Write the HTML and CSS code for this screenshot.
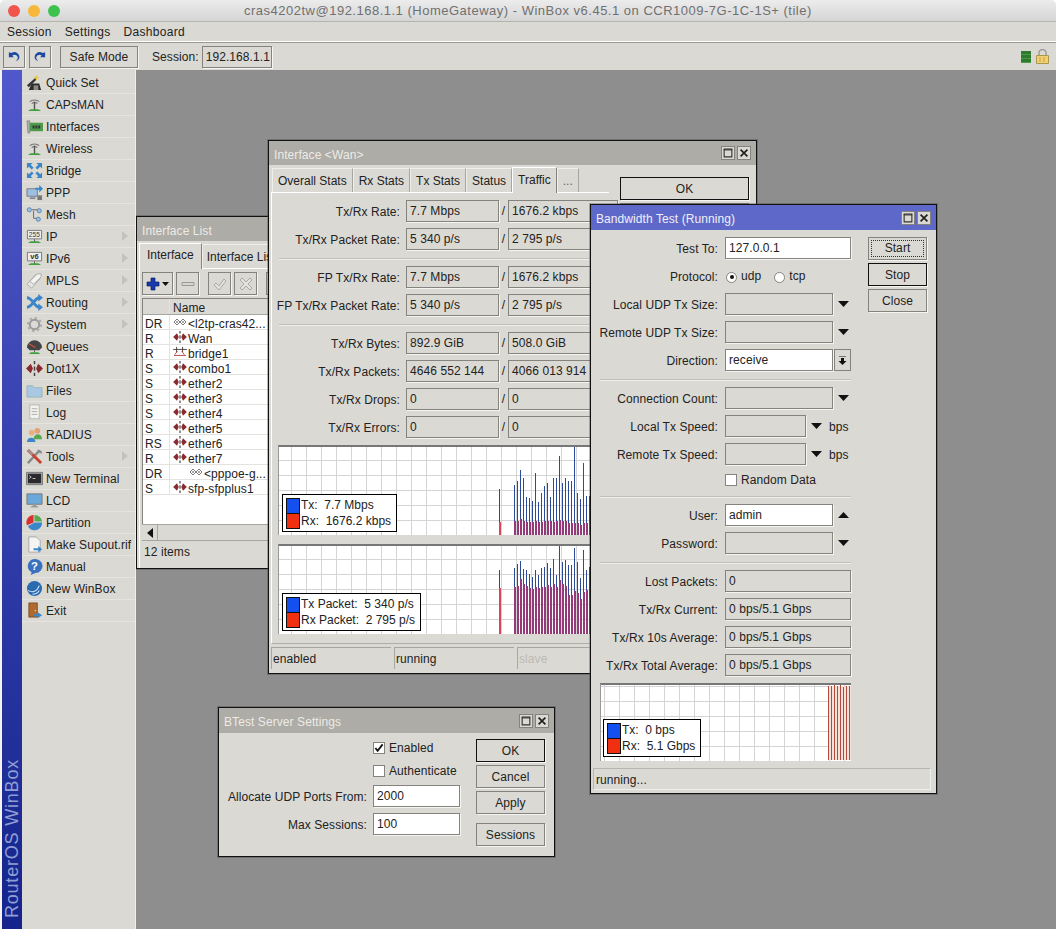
FILE: index.html
```html
<!DOCTYPE html>
<html lang="en">
<head>
  <meta charset="UTF-8">
  <meta name="viewport" content="width=device-width, initial-scale=1.0">
  <title>WinBox</title>
  <link rel="stylesheet" href="styles.css">
</head>
<body>
  <!-- Icon sheet -->
  <svg class="defs" width="0" height="0">
    <symbol id="i-wand" viewBox="0 0 18 18"><path d="M3 17l3-7h8l2 7z" fill="#2b2b2b"/><path d="M1 12L10 4l1.500 1.500L3 14z" fill="#333"/><path d="M11 1l1 2 2 1-2 1-1 2-1-2-2-1 2-1z" fill="#e8c840"/><path d="M8 12h5v5H8z" fill="#8a8a84"/></symbol>
    <symbol id="i-ant" viewBox="0 0 18 18"><path d="M4 6a6 4 0 0 1 10 0M6 8a4 3 0 0 1 6 0" fill="none" stroke="#777" stroke-width="1.200"/><path d="M9 6v9" stroke="#555" stroke-width="1.500"/><path d="M2 16h14l-3-2H5z" fill="#3fa040"/></symbol>
    <symbol id="i-card" viewBox="0 0 18 18"><path d="M1 3h3v13H2z" fill="#aaa" stroke="#777" stroke-width=".6"/><path d="M4 5h14v9H4z" fill="#4d9a4a"/><path d="M7 8h2v3H7zm3 0h2v3h-2zm3 0h2v3h-2z" fill="#333"/></symbol>
    <symbol id="i-bridge" viewBox="0 0 18 18"><path d="M1 1h6L5 3l3 3-2 2-3-3-2 2zM17 1v6l-2-2-3 3-2-2 3-3-2-2zM1 17v-6l2 2 3-3 2 2-3 3 2 2zM17 17h-6l2-2-3-3 2-2 3 3 2-2z" fill="#3a86c8"/></symbol>
    <symbol id="i-ppp" viewBox="0 0 18 18"><path d="M1 5h11v8H1z" fill="#9cc0e0" stroke="#667" stroke-width=".8"/><path d="M4 14h6v2H4z" fill="#889"/><path d="M10 4h4V1l4 4-4 4V6h-4z" fill="#3a86c8"/><path d="M12 12h5v5h-5z" fill="#777"/></symbol>
    <symbol id="i-mesh" viewBox="0 0 18 18"><circle cx="3.500" cy="4" r="2.200" fill="#9cc0e0" stroke="#47a" stroke-width=".8"/><circle cx="14" cy="5" r="2.200" fill="#9cc0e0" stroke="#47a" stroke-width=".8"/><circle cx="13" cy="14" r="2.200" fill="#9cc0e0" stroke="#47a" stroke-width=".8"/><path d="M6 4h6M8 5v8h3" fill="none" stroke="#667"/></symbol>
    <symbol id="i-tag" viewBox="0 0 18 18"><path d="M1 13L10 3h5v4l-9 10z" fill="#e8e8e4" stroke="#aaa"/><path d="M4 10l8-8h4v3l-8 8z" fill="#f4f4f0" stroke="#aaa"/></symbol>
    <symbol id="i-route" viewBox="0 0 18 18"><path d="M1 4c6 0 8 10 13 10" fill="none" stroke="#3a86c8" stroke-width="3"/><path d="M1 14c6 0 8-10 13-10" fill="none" stroke="#3a86c8" stroke-width="3"/><path d="M13 0l5 4-5 4zM13 10l5 4-5 4z" fill="#3a86c8"/></symbol>
    <symbol id="i-gear" viewBox="0 0 18 18"><circle cx="9" cy="9" r="5" fill="none" stroke="#999" stroke-width="2"/><circle cx="9" cy="9" r="7" fill="none" stroke="#aaa" stroke-width="2" stroke-dasharray="2.500 3"/><circle cx="9" cy="9" r="1.500" fill="#ddd"/></symbol>
    <symbol id="i-queue" viewBox="0 0 18 18"><path d="M1 10a8 7.500 0 0 1 16 0l-3 3H4z" fill="#444"/><path d="M3 6l7 4" stroke="#d05040" stroke-width="1.200"/><path d="M9 13v2" stroke="#555"/><path d="M3 17h12l-2-2H5z" fill="#3fa040"/></symbol>
    <symbol id="i-eth" viewBox="0 0 16 14"><path d="M0 7l4.500-4.500L6.500 7l-2 4.500zM16 7l-4.500-4.500L9.500 7l2 4.500z" fill="#8a2a30"/><path d="M8 0v3M8 5v4M8 11v3" stroke="#444" stroke-width="1.400"/></symbol>
    <symbol id="i-dyn" viewBox="0 0 16 14"><path d="M1 7l3.500-3.500L8 7l-3.500 3.500zM8 7l3.500-3.500L15 7l-3.500 3.500z" fill="#fff" stroke="#666"/><path d="M3.500 6h2v2h-2zM10.500 6h2v2h-2z" fill="#777"/></symbol>
    <symbol id="i-brg" viewBox="0 0 16 14"><path d="M0 4h16" stroke="#333"/><path d="M4 1v6M11 1v6" stroke="#333"/><path d="M2 10l3-4M13 10l-3-4M1 11h14" stroke="#a83030" fill="none"/></symbol>
    <symbol id="i-folder" viewBox="0 0 18 18"><path d="M1 4h6l2 2h8v10H1z" fill="#a8c8e4" stroke="#8aa" stroke-width=".7"/></symbol>
    <symbol id="i-log" viewBox="0 0 18 18"><path d="M4 1h10v15l-2-1-1 1-2-1-2 1-1-1-2 1z" fill="#f4f4ee" stroke="#aaa" stroke-width=".8"/><path d="M6 5h6M6 8h6M6 11h6" stroke="#aaa"/></symbol>
    <symbol id="i-users" viewBox="0 0 18 18"><circle cx="6" cy="7" r="3" fill="#e8b080"/><path d="M1 17c0-6 9-6 9 0z" fill="#3a86c8"/><circle cx="12" cy="5" r="3" fill="#e8a070"/><path d="M8 14c0-7 9-7 9 0z" fill="#58a850"/></symbol>
    <symbol id="i-tools" viewBox="0 0 18 18"><path d="M2 16L13 4" stroke="#888" stroke-width="2.500"/><path d="M12 2a4 4 0 0 1 5 4l-3-1-1 1z" fill="#888"/><path d="M2 2l14 14" stroke="#c84030" stroke-width="3"/><path d="M2 2l5 5" stroke="#999" stroke-width="2"/></symbol>
    <symbol id="i-term" viewBox="0 0 18 18"><path d="M.5 2.500h17v13H.5z" fill="#aaa" stroke="#777"/><path d="M2 4h14v10H2z" fill="#2a2a2e"/><path d="M3.500 6l2 1.500-2 1.500M7 9h3" stroke="#ccc" fill="none"/></symbol>
    <symbol id="i-lcd" viewBox="0 0 18 18"><path d="M1 2h16v11H1z" fill="#6aa8dc" stroke="#777"/><path d="M7 13h4v2H7zM5 15h8v1.500H5z" fill="#999"/></symbol>
    <symbol id="i-pie" viewBox="0 0 18 18"><path d="M8 9V1a8 8 0 0 0-7 11z" fill="#d83030"/><path d="M9 8V1a8 8 0 0 1 8 7z" fill="#58a850"/><path d="M2 13l7-4h8a8 8 0 0 1-15 4z" fill="#3a86c8"/></symbol>
    <symbol id="i-sup" viewBox="0 0 18 18"><path d="M3 1h8l4 4v12H3z" fill="#f4f4f4" stroke="#999" stroke-width=".8"/><path d="M8 13h5v-2.500l4 3.500-4 3.500V15H8z" fill="#3a86c8"/></symbol>
    <symbol id="i-globe" viewBox="0 0 18 18"><circle cx="9" cy="9" r="8" fill="#2a6ab0"/><path d="M2 11c5 3 10 1 12-5M7 15c3 0 6-2 7-4" fill="none" stroke="#cde" stroke-width="1.200"/></symbol>
    <symbol id="i-door" viewBox="0 0 18 18"><path d="M3 1h9v15H3z" fill="#b06a30" stroke="#704018" stroke-width=".8"/><circle cx="10" cy="9" r=".9" fill="#fc6"/><path d="M8 13h4v-2.500l5 3.500-5 3.500V15H8z" fill="#3a86c8"/></symbol>
    <symbol id="i-undo" viewBox="0 0 14 12"><path d="M1 1v6h6L5 5c2-2 5-1 6 1s0 4-2 5c3 0 5-3 4-6S8-1 4 2z" fill="#1c4aa0"/></symbol>
    <symbol id="i-max" viewBox="0 0 14 14"><path d="M2.500 2.500h9v9h-9z" fill="none" stroke="#333" stroke-width="1.300"/><path d="M2 3.500h10" stroke="#333"/></symbol>
    <symbol id="i-close" viewBox="0 0 14 14"><path d="M3 3l8 8M11 3l-8 8" stroke="#222" stroke-width="2"/></symbol>
    <symbol id="i-drop" viewBox="0 0 11 6"><path d="M0 0h11L5.500 6z" fill="#111"/></symbol>
    <symbol id="i-up" viewBox="0 0 11 6"><path d="M0 6h11L5.500 0z" fill="#111"/></symbol>
  </svg>

  <!-- Window chrome -->
  <header class="mac-title">
    <div class="lights"><span class="light red"></span><span class="light yellow"></span><span class="light green"></span></div>
    <div class="mac-text">cras4202tw@192.168.1.1 (HomeGateway) - WinBox v6.45.1 on CCR1009-7G-1C-1S+ (tile)</div>
  </header>
  <nav class="menubar"><span>Session</span><span>Settings</span><span>Dashboard</span></nav>
  <div class="toolbar">
    <button class="btn tool"><svg class="undo"><use href="#i-undo"/></svg></button>
    <button class="btn tool"><svg class="undo flip"><use href="#i-undo"/></svg></button>
    <button class="btn safe">Safe Mode</button>
    <span class="session-label">Session:</span>
    <div class="fld session">192.168.1.1</div>
    <div class="tray">
      <div class="hdd"></div>
      <svg class="lock" viewBox="0 0 13 15"><path d="M3 7V4a3.500 3.500 0 0 1 7 0v3" fill="none" stroke="#999" stroke-width="1.400"/><path d="M.5 6.500h12v8H.5z" fill="#f0d070" stroke="#a89850"/><path d="M4 8v5M8 8v5" stroke="#c8a040"/></svg>
    </div>
  </div>

  <div class="main">
    <!-- Side Menu -->
    <aside class="sidebar">
      <div class="brand"><span>RouterOS WinBox</span></div>
      <ul class="menu">
        <li><svg class="ic"><use href="#i-wand"/></svg>Quick Set</li>
        <li><svg class="ic"><use href="#i-ant"/></svg>CAPsMAN</li>
        <li><svg class="ic"><use href="#i-card"/></svg>Interfaces</li>
        <li><svg class="ic"><use href="#i-ant"/></svg>Wireless</li>
        <li><svg class="ic"><use href="#i-bridge"/></svg>Bridge</li>
        <li><svg class="ic"><use href="#i-ppp"/></svg>PPP</li>
        <li><svg class="ic"><use href="#i-mesh"/></svg>Mesh</li>
        <li class="sub"><svg class="ic" viewBox="0 0 18 18"><path d="M1.500 2.500h15v9h-15z" fill="#eee" stroke="#777"/><text x="9" y="10" font-size="7" text-anchor="middle" fill="#333">255</text><path d="M9 12v3" stroke="#555"/><path d="M2 16h14l-3-2H5z" fill="#3fa040"/></svg>IP</li>
        <li class="sub"><svg class="ic" viewBox="0 0 18 18"><path d="M1.500 2.500h15v9h-15z" fill="#eee" stroke="#777"/><text x="9" y="10" font-size="8" font-weight="bold" text-anchor="middle" fill="#333">v6</text><path d="M9 12v3" stroke="#555"/><path d="M2 16h14l-3-2H5z" fill="#3fa040"/></svg>IPv6</li>
        <li class="sub"><svg class="ic"><use href="#i-tag"/></svg>MPLS</li>
        <li class="sub"><svg class="ic"><use href="#i-route"/></svg>Routing</li>
        <li class="sub"><svg class="ic"><use href="#i-gear"/></svg>System</li>
        <li><svg class="ic"><use href="#i-queue"/></svg>Queues</li>
        <li><svg class="ic"><use href="#i-eth"/></svg>Dot1X</li>
        <li><svg class="ic"><use href="#i-folder"/></svg>Files</li>
        <li><svg class="ic"><use href="#i-log"/></svg>Log</li>
        <li><svg class="ic"><use href="#i-users"/></svg>RADIUS</li>
        <li class="sub"><svg class="ic"><use href="#i-tools"/></svg>Tools</li>
        <li><svg class="ic"><use href="#i-term"/></svg>New Terminal</li>
        <li><svg class="ic"><use href="#i-lcd"/></svg>LCD</li>
        <li><svg class="ic"><use href="#i-pie"/></svg>Partition</li>
        <li><svg class="ic"><use href="#i-sup"/></svg>Make Supout.rif</li>
        <li><svg class="ic" viewBox="0 0 18 18"><path d="M9 1a8 7.500 0 0 1 1 15l-5 2 1-3A8 7.500 0 0 1 9 1z" fill="#3a70c0"/><text x="9" y="13" font-size="12" font-weight="bold" text-anchor="middle" fill="#fff">?</text></svg>Manual</li>
        <li><svg class="ic"><use href="#i-globe"/></svg>New WinBox</li>
        <li><svg class="ic"><use href="#i-door"/></svg>Exit</li>
      </ul>
    </aside>

    <main class="desktop">
      <!-- Interface List -->
      <section class="win win-list">
        <div class="win-title"><span>Interface List</span></div>
        <div class="tabs list-tabs">
          <div class="tab active">Interface</div>
          <div class="tab">Interface List</div>
        </div>
        <div class="list-panel">
          <div class="list-tools">
            <button class="btn ltool add">
              <svg viewBox="0 0 14 14" class="plus"><path d="M5 1h4v4h4v4H9v4H5V9H1V5h4z" fill="#1838b0" stroke="#0c1c60" stroke-width=".7"/></svg>
              <svg class="tiny"><use href="#i-drop"/></svg>
            </button>
            <button class="btn ltool"><svg viewBox="0 0 14 14" class="plus"><path d="M1 5.500h12v3H1z" fill="#d8d6d0" stroke="#999"/></svg></button>
            <button class="btn ltool gap"><svg viewBox="0 0 14 14" class="plus"><path d="M1 8l2-2 3 3 5-7 2 2-7 9z" fill="#e4e2dc" stroke="#aaa"/></svg></button>
            <button class="btn ltool"><svg viewBox="0 0 14 14" class="plus"><path d="M3 1l4 4 4-4 2 2-4 4 4 4-2 2-4-4-4 4-2-2 4-4-4-4z" fill="#e4e2dc" stroke="#aaa"/></svg></button>
            <button class="btn ltool gap"></button>
          </div>
          <div class="table">
            <div class="tr th"><div class="flag"></div><div class="name">Name<span class="sort"></span></div></div>
            <div class="tr"><div class="flag">DR</div><div class="name"><svg class="ti"><use href="#i-dyn"/></svg>&lt;l2tp-cras42...</div></div>
            <div class="tr"><div class="flag">R</div><div class="name"><svg class="ti"><use href="#i-eth"/></svg>Wan</div></div>
            <div class="tr"><div class="flag">R</div><div class="name"><svg class="ti"><use href="#i-brg"/></svg>bridge1</div></div>
            <div class="tr"><div class="flag">S</div><div class="name"><svg class="ti"><use href="#i-eth"/></svg>combo1</div></div>
            <div class="tr"><div class="flag">S</div><div class="name"><svg class="ti"><use href="#i-eth"/></svg>ether2</div></div>
            <div class="tr"><div class="flag">S</div><div class="name"><svg class="ti"><use href="#i-eth"/></svg>ether3</div></div>
            <div class="tr"><div class="flag">S</div><div class="name"><svg class="ti"><use href="#i-eth"/></svg>ether4</div></div>
            <div class="tr"><div class="flag">S</div><div class="name"><svg class="ti"><use href="#i-eth"/></svg>ether5</div></div>
            <div class="tr"><div class="flag">RS</div><div class="name"><svg class="ti"><use href="#i-eth"/></svg>ether6</div></div>
            <div class="tr"><div class="flag">R</div><div class="name"><svg class="ti"><use href="#i-eth"/></svg>ether7</div></div>
            <div class="tr"><div class="flag">DR</div><div class="name indent"><svg class="ti"><use href="#i-dyn"/></svg>&lt;pppoe-g...</div></div>
            <div class="tr"><div class="flag">S</div><div class="name"><svg class="ti"><use href="#i-eth"/></svg>sfp-sfpplus1</div></div>
          </div>
          <div class="hscroll"><div class="sbtn"><svg viewBox="0 0 6 10" class="sarrow"><path d="M6 0v10L0 5z" fill="#111"/></svg></div></div>
          <div class="list-status">12 items</div>
        </div>
      </section>

      <!-- Interface Wan -->
      <section class="win win-iface">
        <div class="win-title"><span>Interface &lt;Wan&gt;</span><div class="wbtns"><div class="wbtn"><svg><use href="#i-max"/></svg></div><div class="wbtn"><svg><use href="#i-close"/></svg></div></div></div>
        <div class="iface-body">
          <div class="iface-left">
            <div class="tabs iface-tabs">
              <div class="tab">Overall Stats</div>
              <div class="tab">Rx Stats</div>
              <div class="tab">Tx Stats</div>
              <div class="tab">Status</div>
              <div class="tab active">Traffic</div>
              <div class="tab more">...</div>
            </div>
            <div class="stats">
              <div class="row"><div class="lbl">Tx/Rx Rate:</div><div class="fld f1">7.7 Mbps</div><i class="slash">/</i><div class="fld f2">1676.2 kbps</div></div>
              <div class="row"><div class="lbl">Tx/Rx Packet Rate:</div><div class="fld f1">5 340 p/s</div><i class="slash">/</i><div class="fld f2">2 795 p/s</div></div>
              <div class="sep"></div>
              <div class="row"><div class="lbl">FP Tx/Rx Rate:</div><div class="fld f1">7.7 Mbps</div><i class="slash">/</i><div class="fld f2">1676.2 kbps</div></div>
              <div class="row"><div class="lbl">FP Tx/Rx Packet Rate:</div><div class="fld f1">5 340 p/s</div><i class="slash">/</i><div class="fld f2">2 795 p/s</div></div>
              <div class="sep"></div>
              <div class="row"><div class="lbl">Tx/Rx Bytes:</div><div class="fld f1">892.9 GiB</div><i class="slash">/</i><div class="fld f2">508.0 GiB</div></div>
              <div class="row"><div class="lbl">Tx/Rx Packets:</div><div class="fld f1">4646 552 144</div><i class="slash">/</i><div class="fld f2">4066 013 914</div></div>
              <div class="row"><div class="lbl">Tx/Rx Drops:</div><div class="fld f1">0</div><i class="slash">/</i><div class="fld f2">0</div></div>
              <div class="row"><div class="lbl">Tx/Rx Errors:</div><div class="fld f1">0</div><i class="slash">/</i><div class="fld f2">0</div></div>

              <div class="chart chart-wide first">
                <svg class="bars" width="330" height="90">
                  <path class="blue" d="M221.500 44V77M236.500 40V76M239.500 36V76M242.500 25V74M245.500 33V76M248.500 52V77M251.500 53V77M254.500 56V77M257.500 28V76M260.500 57V77M263.500 48V77M266.500 41V76M269.500 38V76M272.500 52V76M275.500 33V77M278.500 33V76M281.500 11V75M284.500 38V76M287.500 33V76M290.500 36V78M293.500 36V78M296.500 2V78M299.500 48V78M302.500 54V80M305.500 18V78M308.500 51V78M311.500 51V78"/>
                  <path class="hot" d="M222 77V90"/>
                  <path class="purple" d="M237 76V90M240 76V90M243 74V90M246 76V90M249 77V90M252 77V90M255 77V90M258 76V90M261 77V90M264 77V90M267 76V90M270 76V90M273 76V90M276 77V90M279 76V90M282 75V90M285 76V90M288 76V90M291 78V90M294 78V90M297 78V90M300 78V90M303 80V90M306 78V90M309 78V90M312 78V90"/>
                </svg>
                <div class="legend leg-a">
                  <div class="swatches"><b class="sw-tx"></b><b class="sw-rx"></b></div>
                  <div class="leg-text"><div>Tx:  7.7 Mbps</div><div>Rx:  1676.2 kbps</div></div>
                </div>
              </div>
              <div class="chart chart-wide">
                <svg class="bars" width="330" height="90">
                  <path class="blue" d="M221.500 26V44M236.500 24V43M239.500 20V42M242.500 17V35M245.500 25V40M248.500 26V42M251.500 30V44M254.500 33V45M257.500 26V43M260.500 31V44M263.500 24V43M266.500 23V43M269.500 19V41M272.500 24V43M275.500 15V40M278.500 31V43M281.500 2V36M284.500 18V40M287.500 16V42M290.500 21V51M293.500 21V51M296.500 4V47M299.500 18V49M302.500 34V55M305.500 6V48M308.500 26V46M311.500 23V52"/>
                  <path class="hot" d="M222 44V90"/>
                  <path class="purple" d="M237 43V90M240 42V90M243 35V90M246 40V90M249 42V90M252 44V90M255 45V90M258 43V90M261 44V90M264 43V90M267 43V90M270 41V90M273 43V90M276 40V90M279 43V90M282 36V90M285 40V90M288 42V90M291 51V90M294 51V90M297 47V90M300 49V90M303 55V90M306 48V90M309 46V90M312 52V90"/>
                </svg>
                <div class="legend leg-a">
                  <div class="swatches"><b class="sw-tx"></b><b class="sw-rx"></b></div>
                  <div class="leg-text"><div>Tx Packet:  5 340 p/s</div><div>Rx Packet:  2 795 p/s</div></div>
                </div>
              </div>
            </div>
          </div>
          <div class="iface-side">
            <button class="btn side-btn">OK</button>
            <button class="btn side-btn"></button>
          </div>
        </div>
        <div class="statusbar">
          <div class="cell">enabled</div>
          <div class="cell">running</div>
          <div class="cell off">slave</div>
        </div>
      </section>

      <!-- BTest Server -->
      <section class="win win-btest">
        <div class="win-title"><span>BTest Server Settings</span><div class="wbtns"><div class="wbtn"><svg><use href="#i-max"/></svg></div><div class="wbtn"><svg><use href="#i-close"/></svg></div></div></div>
        <div class="btest-body">
          <div class="btest-form">
            <div class="row check"><div class="lbl"></div><div class="cb"><svg viewBox="0 0 11 11"><path d="M1.500 5.500l2.500 3 5.500-7" fill="none" stroke="#111" stroke-width="2"/></svg></div>Enabled</div>
            <div class="row check"><div class="lbl"></div><div class="cb"></div>Authenticate</div>
            <div class="row"><div class="lbl">Allocate UDP Ports From:</div><div class="fld white">2000</div></div>
            <div class="row"><div class="lbl">Max Sessions:</div><div class="fld white">100</div></div>
          </div>
          <div class="btest-btns">
            <button class="btn default">OK</button>
            <button class="btn">Cancel</button>
            <button class="btn">Apply</button>
            <button class="btn spaced">Sessions</button>
          </div>
        </div>
      </section>

      <!-- Bandwidth Test -->
      <section class="win win-bw">
        <div class="win-title on"><span>Bandwidth Test (Running)</span><div class="wbtns"><div class="wbtn"><svg><use href="#i-max"/></svg></div><div class="wbtn"><svg><use href="#i-close"/></svg></div></div></div>
        <div class="bw-body">
          <div class="bw-form">
            <div class="row"><div class="lbl">Test To:</div><div class="fld white full">127.0.0.1</div></div>
            <div class="row"><div class="lbl">Protocol:</div><span class="radio on"></span><span class="rlabel">udp</span><span class="radio"></span><span class="rlabel">tcp</span></div>
            <div class="row"><div class="lbl">Local UDP Tx Size:</div><div class="fld mid"></div><svg class="drop"><use href="#i-drop"/></svg></div>
            <div class="row"><div class="lbl">Remote UDP Tx Size:</div><div class="fld mid"></div><svg class="drop"><use href="#i-drop"/></svg></div>
            <div class="row"><div class="lbl">Direction:</div><div class="fld white mid">receive</div><div class="selbtn"><svg viewBox="0 0 9 9"><path d="M1 0h7" stroke="#111"/><path d="M3 2h3v3h2.500L4.500 9 .5 5H3z" fill="#111"/></svg></div></div>
            <div class="sep"></div>
            <div class="row"><div class="lbl">Connection Count:</div><div class="fld mid"></div><svg class="drop"><use href="#i-drop"/></svg></div>
            <div class="row"><div class="lbl">Local Tx Speed:</div><div class="fld short"></div><svg class="drop"><use href="#i-drop"/></svg><span class="unit">bps</span></div>
            <div class="row"><div class="lbl">Remote Tx Speed:</div><div class="fld short"></div><svg class="drop"><use href="#i-drop"/></svg><span class="unit">bps</span></div>
            <div class="row check random"><div class="lbl"></div><div class="cb"></div>Random Data</div>
            <div class="sep"></div>
            <div class="row"><div class="lbl">User:</div><div class="fld white mid">admin</div><svg class="drop"><use href="#i-up"/></svg></div>
            <div class="row"><div class="lbl">Password:</div><div class="fld mid"></div><svg class="drop"><use href="#i-drop"/></svg></div>
            <div class="sep"></div>
            <div class="row"><div class="lbl">Lost Packets:</div><div class="fld full">0</div></div>
            <div class="row"><div class="lbl">Tx/Rx Current:</div><div class="fld full">0 bps/5.1 Gbps</div></div>
            <div class="row"><div class="lbl">Tx/Rx 10s Average:</div><div class="fld full">0 bps/5.1 Gbps</div></div>
            <div class="row"><div class="lbl">Tx/Rx Total Average:</div><div class="fld full">0 bps/5.1 Gbps</div></div>
            <div class="chart chart-bw">
              <svg class="bars" width="251" height="78">
                <path class="rust-bg" d="M229 3h22v74h-22z"/>
                <path class="rust" d="M228.500 3V77M231.500 3V77M234.500 2V77M237.500 3V77M240.500 2V77M243.500 4V77M246.500 3V77M249.500 3V77"/>
              </svg>
              <div class="legend leg-b">
                <div class="swatches"><b class="sw-tx"></b><b class="sw-rx"></b></div>
                <div class="leg-text"><div>Tx:  0 bps</div><div>Rx:  5.1 Gbps</div></div>
              </div>
            </div>
          </div>
          <div class="bw-btns">
            <button class="btn focus"><span>Start</span></button>
            <button class="btn default">Stop</button>
            <button class="btn">Close</button>
          </div>
        </div>
        <div class="bw-status">running...</div>
      </section>
    </main>
  </div>
</body>
</html>
```
FILE: styles.css
```css
/* General Reset */
* {
  margin: 0;
  padding: 0;
  box-sizing: border-box;
}

body {
  width: 1056px;
  height: 929px;
  overflow: hidden;
  background: #fff;
  color: #222;
  font: 12px "Liberation Sans", Arial, sans-serif;
  letter-spacing: 0.08px;
  display: flex;
  flex-direction: column;
}

svg text {
  font-family: "Liberation Sans", Arial, sans-serif;
}

.defs {
  position: absolute;
}

button {
  font: inherit;
  letter-spacing: inherit;
  color: inherit;
}

/* Title Bar */
.mac-title {
  height: 22px;
  display: flex;
  align-items: center;
  background: linear-gradient(#ececec, #d5d5d5);
  border-bottom: 1px solid #b5b5b0;
  border-radius: 5px 5px 0 0;
  flex: none;
}

.lights {
  display: flex;
  gap: 8px;
  padding-left: 8px;
  width: 244px;
}

.light {
  width: 12px;
  height: 12px;
  border-radius: 50%;
}

.red { background: #f0544c; }
.yellow { background: #f6b73a; }
.green { background: #3cc24f; }

.mac-text {
  color: #707070;
  font-size: 13px;
  letter-spacing: 0.5px;
  white-space: nowrap;
}

/* Menu Bar */
.menubar {
  height: 20px;
  display: flex;
  align-items: center;
  gap: 13px;
  padding-left: 7px;
  background: #dbd9d3;
  border-bottom: 1px solid #fff;
  letter-spacing: 0.3px;
  flex: none;
}

/* Tool Bar */
.toolbar {
  height: 28px;
  display: flex;
  align-items: center;
  background: #dbd9d3;
  border-top: 1px solid #9a9892;
  padding-left: 3px;
  flex: none;
}

.btn {
  background: #dbd9d3;
  border: 1px solid #85837d;
  box-shadow: 1px 1px 0 #f6f5f1;
  height: 23px;
  display: flex;
  align-items: center;
  justify-content: center;
}

.tool {
  width: 22px;
  height: 22px;
  margin-right: 4px;
}

.undo {
  width: 12px;
  height: 11px;
}

.flip {
  transform: scaleX(-1);
}

.safe {
  width: 78px;
  height: 22px;
  margin-left: 5px;
}

.session-label {
  margin-left: 14px;
  margin-right: 3px;
}

.session {
  width: 70px;
  height: 21px;
}

.tray {
  margin-left: auto;
  display: flex;
  align-items: center;
  gap: 5px;
  padding-right: 7px;
}

.hdd {
  width: 10px;
  height: 12px;
  background: repeating-linear-gradient(#2f7a2f 0 3px, #4a9a45 3px 4px);
}

.lock {
  width: 13px;
  height: 15px;
}

/* Main Area */
.main {
  flex: 1;
  display: flex;
  min-height: 0;
}

.sidebar {
  width: 136px;
  display: flex;
  background: #dbd9d3;
  border-left: 2px solid #f4f3ef;
  border-right: 1px solid #f0efea;
  flex: none;
  z-index: 1;
}

.brand {
  width: 20px;
  background: linear-gradient(#5058cc, #3f49b8 30%, #14248c);
  display: flex;
  align-items: flex-end;
  justify-content: center;
  padding-bottom: 11px;
}

.brand span {
  writing-mode: vertical-rl;
  transform: rotate(180deg);
  font-size: 18px;
  letter-spacing: 0.8px;
  color: #8f9fd4;
  white-space: nowrap;
}

.menu {
  list-style: none;
  flex: 1;
  padding-top: 2px;
}

.menu li {
  height: 22px;
  display: flex;
  align-items: center;
  padding-left: 4px;
  border-bottom: 1px solid #e6e4df;
  position: relative;
  white-space: nowrap;
}

.menu .sub::after {
  content: "";
  position: absolute;
  left: 100px;
  top: 5px;
  border-left: 6px solid #c4c2bc;
  border-top: 5px solid transparent;
  border-bottom: 5px solid transparent;
}

.ic {
  width: 17px;
  height: 17px;
  margin-right: 3px;
  flex: none;
}

.desktop {
  flex: 1;
  position: relative;
  background: #8e8e8e;
}

/* Windows */
.win {
  position: absolute;
  display: flex;
  flex-direction: column;
  background: #dbd9d3;
  border: 1px solid #111;
  box-shadow: 0 0 0 1px rgba(60, 60, 60, 0.35);
  overflow: hidden;
}

.win-list { left: 0; top: 146px; width: 200px; height: 353px; }
.win-iface { left: 132px; top: 70px; width: 489px; height: 534px; }
.win-btest { left: 82px; top: 637px; width: 337px; height: 150px; }
.win-bw { left: 454px; top: 134px; width: 347px; height: 590px; }

.win-title {
  height: 24px;
  flex: none;
  display: flex;
  align-items: center;
  justify-content: space-between;
  padding: 0 5px;
  background: #aeaca6;
  color: #ecebe6;
  white-space: nowrap;
}

.win-title span {
  padding-top: 3px;
}

.win-title.on {
  background: #5d68c8;
  color: #f0f0f8;
}

.win-bw .win-title,
.win-btest .win-title {
  height: 25px;
}

.wbtns {
  display: flex;
  gap: 2px;
}

.wbtn {
  width: 14px;
  height: 14px;
  background: #dbd9d3;
  border: 1px solid #85837d;
}

.wbtn svg {
  width: 12px;
  height: 12px;
  display: block;
}

/* Tabs */
.tabs {
  height: 27px;
  display: flex;
  align-items: flex-end;
  flex: none;
  letter-spacing: 0;
}

.tab {
  height: 24px;
  display: flex;
  align-items: center;
  padding: 0 5px;
  border: 1px solid #efeee9;
  border-bottom: 0;
  border-right-color: #a8a6a0;
  white-space: nowrap;
}

.tab.active {
  height: 26px;
  padding-bottom: 2px;
  background: #dbd9d3;
  border-color: #fff;
  border-right-color: #85837d;
  margin-bottom: -1px;
  position: relative;
  z-index: 1;
}

.iface-tabs {
  padding-left: 1px;
}

.more {
  color: #666;
}

/* Form Rows */
.row {
  height: 22px;
  display: flex;
  align-items: center;
  margin-bottom: 6px;
  white-space: nowrap;
}

.lbl {
  text-align: right;
  padding-top: 2px;
  flex: none;
}

.fld {
  height: 22px;
  line-height: 21px;
  padding-left: 3px;
  background: #dbd9d3;
  border: 1px solid #85837d;
  box-shadow: 1px 1px 0 #f6f5f1;
  flex: none;
  white-space: nowrap;
  overflow: hidden;
}

.fld.white {
  background: #fff;
}

.sep {
  height: 2px;
  margin: 8px 0 6px;
  border-top: 1px solid #c0beb8;
  border-bottom: 1px solid #f0efea;
}

.slash {
  width: 9px;
  font-style: normal;
  text-align: center;
  flex: none;
}

/* Interface Window */
.iface-body {
  flex: 1;
  display: flex;
}

.iface-left {
  width: 340px;
  flex: none;
  padding-left: 2px;
}

.stats {
  height: 452px;
  padding-top: 7px;
  border-top: 1px solid #fff;
  border-left: 1px solid #fff;
  border-bottom: 1px solid #b0aea8;
}

.stats .lbl {
  width: 128px;
  margin-right: 6px;
}

.stats .sep {
  margin-left: 7px;
}

.f1 { width: 93px; }
.f2 { width: 110px; }

.iface-side {
  padding: 12px 0 0 11px;
  display: flex;
  flex-direction: column;
  gap: 3px;
}

.side-btn {
  width: 129px;
  height: 23px;
}

.iface-side .side-btn:first-child {
  border-color: #111;
}

.statusbar {
  display: flex;
  gap: 3px;
  padding: 2px 0 4px 2px;
  flex: none;
}

.cell {
  width: 120px;
  height: 22px;
  line-height: 22px;
  padding-left: 1px;
  border-top: 1px solid #a8a6a0;
  border-left: 1px solid #a8a6a0;
}

.off {
  color: #bcbab4;
}

/* Charts */
.chart {
  position: relative;
  height: 90px;
  background-color: #fff;
  background-image:
    linear-gradient(#d4d4d4 1px, transparent 1px),
    linear-gradient(90deg, #d4d4d4 1px, transparent 1px);
  background-size: 15px 15px;
  background-position: 12px 13px;
  border-top: 2px solid #777;
  border-left: 1px solid #999;
  overflow: hidden;
}

.chart-wide {
  margin: 0 0 9px 6px;
  width: 330px;
}

.first {
  margin-top: 7px;
}

.bars {
  position: absolute;
  left: -1px;
  top: -2px;
  fill: none;
}

.blue { stroke: #2d4a98; stroke-width: 1; }
.purple { stroke: #953a78; stroke-width: 2; }
.hot { stroke: #d8455c; stroke-width: 2; }
.rust { stroke: #b5493b; stroke-width: 1; }
.rust-bg { fill: #f6e0da; }

.legend {
  position: absolute;
  left: 3px;
  top: 47px;
  height: 38px;
  display: flex;
  align-items: center;
  gap: 1px;
  padding: 0 5px 0 3px;
  background: #fff;
  border: 1px solid #000;
  letter-spacing: 0;
  white-space: pre;
}

.leg-b {
  top: 34px;
  left: 2px;
}

.swatches {
  display: flex;
  flex-direction: column;
}

.swatches b {
  display: block;
  width: 14px;
  height: 16px;
  border: 1px solid #111;
}

.swatches b + b {
  margin-top: -1px;
}

.sw-tx { background: #1450f0; }
.sw-rx { background: #f03010; }

.leg-text div {
  height: 16px;
  line-height: 16px;
}

/* Interface List Window */
.list-tabs {
  padding-left: 2px;
}

.list-tabs .tab {
  padding: 0 5px 0 4px;
}

.list-tabs .tab.active {
  padding: 0 7px 4px;
  border-left-color: #fff;
}

.list-panel {
  flex: 1;
  margin-left: 2px;
  padding: 3px 0 0 2px;
  border-top: 1px solid #fff;
  border-left: 1px solid #fff;
  display: flex;
  flex-direction: column;
  min-height: 0;
}

.list-tools {
  display: flex;
  gap: 3px;
  height: 23px;
  margin-bottom: 3px;
  flex: none;
}

.ltool {
  width: 23px;
  flex: none;
  gap: 2px;
}

.add {
  width: 31px;
}

.gap {
  margin-left: 6px;
}

.plus {
  width: 14px;
  height: 14px;
}

.tiny {
  width: 7px;
  height: 4px;
}

.table {
  flex: 1;
  background: #fff;
  border-top: 1px solid #85837d;
  border-left: 1px solid #85837d;
}

.tr {
  display: flex;
  height: 15px;
  line-height: 15px;
  border-bottom: 1px solid #e4e3df;
  white-space: nowrap;
}

.tr > * {
  padding-top: 2px;
}

.th {
  height: 16px;
  background: #dbd9d3;
  border-bottom: 1px solid #a8a6a0;
}

.flag {
  width: 27px;
  padding-left: 2px;
  border-right: 1px solid #e4e3df;
  flex: none;
}

.name {
  display: flex;
  align-items: flex-start;
  padding-left: 3px;
}

.indent {
  padding-left: 19px;
}

.sort {
  margin: 3px 0 0 74px;
  border-bottom: 7px solid #c4c2bc;
  border-left: 4px solid transparent;
  border-right: 4px solid transparent;
}

.ti {
  width: 14px;
  height: 12px;
  margin-right: 1px;
  margin-top: -1px;
  flex: none;
}

.hscroll {
  height: 17px;
  flex: none;
  border-top: 1px solid #a8a6a0;
  border-bottom: 1px solid #a8a6a0;
}

.sbtn {
  width: 16px;
  height: 15px;
  border-right: 1px solid #a8a6a0;
  display: flex;
  align-items: center;
  justify-content: center;
}

.sarrow {
  width: 6px;
  height: 10px;
}

.list-status {
  height: 27px;
  line-height: 22px;
  padding-left: 2px;
  flex: none;
}

/* Bandwidth Test Window */
.bw-body {
  display: flex;
}

.bw-form {
  width: 277px;
  padding-top: 7px;
  flex: none;
}

.bw-form .lbl {
  width: 127px;
  margin-right: 7px;
}

.bw-form .sep {
  margin-left: 9px;
  width: 251px;
}

.full { width: 126px; }
.mid { width: 108px; }
.short { width: 81px; }

.drop {
  width: 11px;
  height: 6px;
  margin-left: 5px;
  flex: none;
}

.unit {
  margin-left: 7px;
  padding-top: 2px;
}

.selbtn {
  width: 17px;
  height: 22px;
  margin-left: 1px;
  border: 1px solid #85837d;
  display: flex;
  align-items: center;
  justify-content: center;
}

.selbtn svg {
  width: 9px;
  height: 9px;
}

.radio {
  width: 11px;
  height: 11px;
  margin: 2px 0 0 1px;
  border-radius: 50%;
  background: #fff;
  border: 1px solid #85837d;
  flex: none;
  position: relative;
}

.radio.on::after {
  content: "";
  position: absolute;
  left: 2.500px;
  top: 2.500px;
  width: 4px;
  height: 4px;
  border-radius: 50%;
  background: #111;
}

.rlabel {
  margin: 0 12px 0 4px;
}

.check {
  height: 18px;
  margin-bottom: 5px;
}

.random {
  height: 17px;
  margin-bottom: 6px;
}

.cb {
  width: 12px;
  height: 12px;
  margin-right: 4px;
  background: #fff;
  border: 1px solid #85837d;
  flex: none;
}

.cb svg {
  display: block;
  width: 10px;
  height: 10px;
}

.chart-bw {
  height: 78px;
  width: 251px;
  margin: 7px 0 0 9px;
  background-position: 3px 1px;
}

.bw-btns {
  width: 59px;
  padding-top: 7px;
  display: flex;
  flex-direction: column;
  gap: 3px;
}

.default {
  border-color: #111;
}

.focus span {
  display: block;
  width: 53px;
  height: 17px;
  line-height: 15px;
  border: 1px dotted #333;
}

.bw-status {
  margin: 7px 0 0 2px;
  width: 338px;
  height: 22px;
  line-height: 22px;
  padding-left: 2px;
  border: 1px solid #b8b6b0;
  border-right-color: #eee;
  border-bottom-color: #eee;
}

/* BTest Window */
.btest-body {
  display: flex;
  padding-top: 6px;
}

.btest-form {
  width: 257px;
  flex: none;
}

.btest-form .lbl {
  width: 148px;
  margin-right: 6px;
}

.btest-form .row:last-child {
  margin-bottom: 0;
}

.btest-form .fld {
  width: 87px;
}

.btest-btns {
  width: 69px;
  display: flex;
  flex-direction: column;
  gap: 3px;
}

.spaced {
  margin-top: 6px;
}
```
